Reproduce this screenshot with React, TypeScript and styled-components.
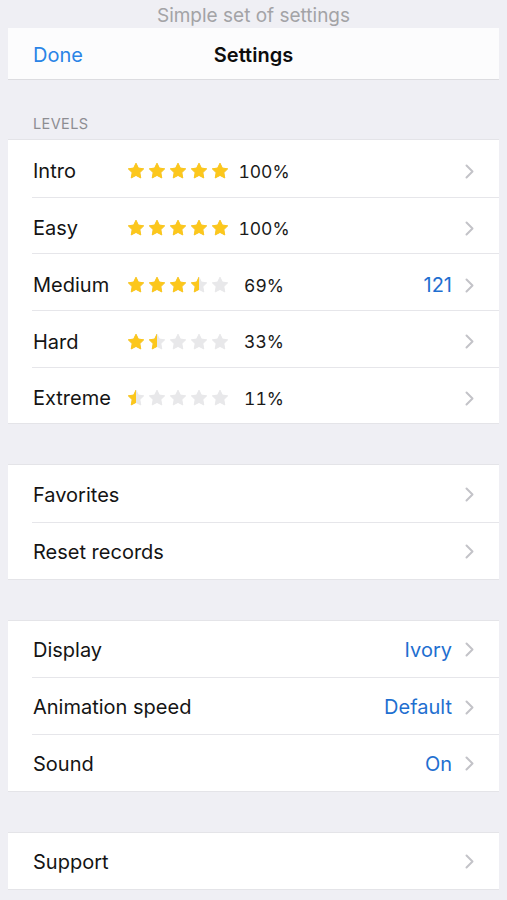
import React, { useId } from 'react';
import styled, { createGlobalStyle } from 'styled-components';

const GlobalStyle = createGlobalStyle`
	body {
		margin: 0;
		background: #efeff4;
		font-family: Inter, 'Noto Sans', sans-serif;
		color: #111;
		-webkit-font-smoothing: antialiased;
	}
`;

const Page = styled.div`
	padding: 0 8px 10px;
`;

const Caption = styled.div`
	height: 28px;
	line-height: 31px;
	text-align: center;
	font-size: 19px;
	color: #a3a3a6;
`;

const NavBar = styled.div`
	height: 51px;
	background: #fcfcfd;
	border-bottom: 1px solid #dcdce0;
	display: grid;
	grid-template-columns: 1fr auto 1fr;
	align-items: center;
	padding: 2px 25px 0;
	box-sizing: content-box;
	height: 49px;
`;

const NavButton = styled.span`
	font-size: 20px;
	color: #2a84e6;
`;

const NavTitle = styled.span`
	font-size: 20px;
	font-weight: 600;
	color: #0d0d0d;
`;

const SectionHeader = styled.div`
	height: 60px;
	display: flex;
	align-items: flex-end;
	padding: 0 0 8px 25px;
	box-sizing: border-box;
	font-size: 14.5px;
	letter-spacing: 0.4px;
	color: #8d8d92;
`;

const Card = styled.div<{ $gap?: boolean }>`
	background: #fff;
	box-shadow: 0 -1px 0 #e4e4e8, 0 1px 0 #e4e4e8;
	margin-top: ${(p) => (p.$gap ? '42px' : '0')};
`;

const Row = styled.div<{ $inset: number; $lift?: number }>`
	height: 56.67px;
	box-sizing: border-box;
	display: flex;
	align-items: center;
	padding: ${(p) => p.$lift ?? 2}px 25px 0;

	& + & {
		border-top: 1px solid #e6e6ea;
		border-image: linear-gradient(
				to right,
				transparent ${(p) => p.$inset}px,
				#e6e6ea ${(p) => p.$inset}px
			)
			1;
	}
`;

const Label = styled.span<{ $width?: number }>`
	font-size: 20px;
	color: #141414;
	width: ${(p) => (p.$width ? `${p.$width}px` : 'auto')};
	flex-shrink: 0;
`;

const Stars = styled.div`
	display: flex;
	gap: 3px;
	margin-left: -1px;
`;

const Percent = styled.span`
	width: 62px;
	margin-left: 4px;
	text-align: center;
	font-size: 17.5px;
	color: #1a1a1a;
	font-variant-numeric: tabular-nums;
`;

const Value = styled.span`
	margin-left: auto;
	font-size: 20px;
	color: #1f6fd0;
`;

const Chevron = styled.svg<{ $pushed?: boolean }>`
	width: 9px;
	height: 15px;
	margin-left: ${(p) => (p.$pushed ? '13px' : 'auto')};
	flex-shrink: 0;
`;

const STAR_PATH =
	'M9 1.2l2.35 4.9 5.35.74-3.88 3.76.94 5.3L9 13.38 4.24 15.9l.94-5.3L1.3 6.84l5.35-.74z';

const Star: React.FC<{ fill: number }> = ({ fill }) => {
	const id = useId();
	return (
		<svg width="18" height="18" viewBox="0 0 18 18">
			<defs>
				<clipPath id={id}>
					<rect x="0" y="0" width={18 * fill} height="18" />
				</clipPath>
			</defs>
			<path d={STAR_PATH} fill="#e8e8ea" stroke="#e8e8ea" strokeWidth="1" strokeLinejoin="round" />
			<path
				d={STAR_PATH}
				fill="#fcc71c"
				stroke="#fcc71c"
				strokeWidth="1"
				strokeLinejoin="round"
				clipPath={`url(#${id})`}
			/>
		</svg>
	);
};

const Arrow: React.FC<{ pushed?: boolean }> = ({ pushed }) => (
	<Chevron $pushed={pushed} viewBox="0 0 9 15">
		<path
			d="M1.5 1.5L7.5 7.5L1.5 13.5"
			fill="none"
			stroke="#c3c3c8"
			strokeWidth="2"
			strokeLinecap="round"
			strokeLinejoin="round"
		/>
	</Chevron>
);

interface Level {
	name: string;
	stars: number;
	percent: number;
	value?: string;
}

const levels: Level[] = [
	{ name: 'Intro', stars: 5, percent: 100 },
	{ name: 'Easy', stars: 5, percent: 100 },
	{ name: 'Medium', stars: 3.5, percent: 69, value: '121' },
	{ name: 'Hard', stars: 1.5, percent: 33 },
	{ name: 'Extreme', stars: 0.5, percent: 11 },
];

interface Item {
	label: string;
	value?: string;
}

const groups: Item[][] = [
	[{ label: 'Favorites' }, { label: 'Reset records' }],
	[
		{ label: 'Display', value: 'Ivory' },
		{ label: 'Animation speed', value: 'Default' },
		{ label: 'Sound', value: 'On' },
	],
	[{ label: 'Support' }],
];

const App: React.FC = () => {
	return (
		<>
			<GlobalStyle />
			<Page>
				<Caption>Simple set of settings</Caption>
				<NavBar>
					<NavButton>Done</NavButton>
					<NavTitle>Settings</NavTitle>
					<span />
				</NavBar>
				<SectionHeader>LEVELS</SectionHeader>
				<Card>
					{levels.map((level) => (
						<Row key={level.name} $inset={302} $lift={6}>
							<Label $width={95}>{level.name}</Label>
							<Stars>
								{[0, 1, 2, 3, 4].map((i) => (
									<Star key={i} fill={Math.max(0, Math.min(1, level.stars - i))} />
								))}
							</Stars>
							<Percent>{level.percent}%</Percent>
							{level.value && <Value>{level.value}</Value>}
							<Arrow pushed={!!level.value} />
						</Row>
					))}
				</Card>
				{groups.map((group, gi) => (
					<Card key={gi} $gap>
						{group.map((item) => (
							<Row key={item.label} $inset={25}>
								<Label>{item.label}</Label>
								{item.value && <Value>{item.value}</Value>}
								<Arrow pushed={!!item.value} />
							</Row>
						))}
					</Card>
				))}
			</Page>
		</>
	);
};

export default App;
